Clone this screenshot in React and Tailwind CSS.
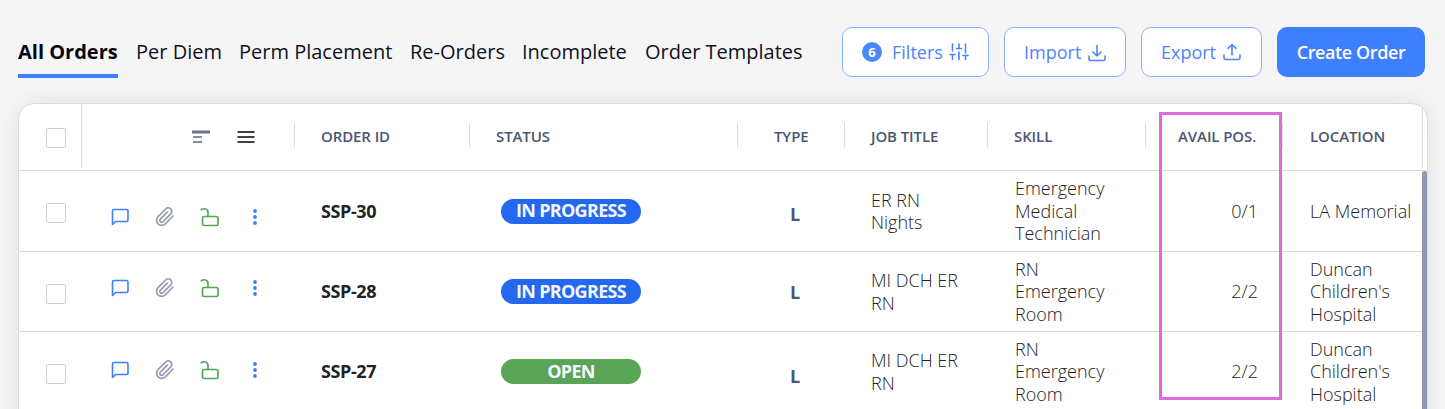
const tabs = [
  { label: "All Orders", active: true, w: "w-[100px]" },
  { label: "Per Diem", w: "w-[85px]" },
  { label: "Perm Placement", w: "w-[153px]" },
  { label: "Re-Orders", w: "w-[94px]" },
  { label: "Incomplete", w: "w-[105px]" },
  { label: "Order Templates", w: "w-[158px]" },
];

const rows = [
  { id: "SSP-30", status: "IN PROGRESS", color: "bg-[#2368ef]", job: ["ER RN", "Nights"], skill: ["Emergency", "Medical", "Technician"], avail: "0/1", location: ["LA Memorial"], height: "h-[81px]", icons: "pt-[11px]", type: "pt-[6px]", check: "pt-[3px]" },
  { id: "SSP-28", status: "IN PROGRESS", color: "bg-[#2368ef]", job: ["MI DCH ER", "RN"], skill: ["RN", "Emergency", "Room"], avail: "2/2", location: ["Duncan", "Children's", "Hospital"], height: "h-[80px]", icons: "pb-[7px]", type: "pt-[2px]", check: "pt-[5px]" },
  { id: "SSP-27", status: "OPEN", color: "bg-[#59a457]", job: ["MI DCH ER", "RN"], skill: ["RN", "Emergency", "Room"], avail: "2/2", location: ["Duncan", "Children's", "Hospital"], height: "h-[80px]", icons: "pb-[4px]", type: "pt-[9px]", check: "pt-[5px]" },
];

const headers = [
  { label: "ORDER ID", w: "w-[175px]", pad: "pl-[26px]" },
  { label: "STATUS", w: "w-[268px]", pad: "pl-[26px]" },
  { label: "TYPE", w: "w-[107px]", pad: "pl-[36px]" },
  { label: "JOB TITLE", w: "w-[143px]", pad: "pl-[26px]" },
  { label: "SKILL", w: "w-[158px]", pad: "pl-[26px]" },
  { label: "AVAIL POS.", w: "w-[137px]", pad: "pl-[32px]" },
];

function Checkbox() {
  return <span className="block size-5 rounded-[2px] border border-[#ccd0d9] bg-white" />;
}

function SlidersIcon() {
  return (
    <svg className="size-5" viewBox="0 0 20 20" fill="none" stroke="currentColor" strokeWidth="1.6" strokeLinecap="round">
      <path d="M3.5 2v7M3.5 12.500v5M1 12.500h5M10 2v4M10 10v7.500M7.500 6.500h5M16.500 2v9M16.500 14.500v3M14 13.500h5" />
    </svg>
  );
}

function TransferIcon({ up }) {
  return (
    <svg className="h-5 w-[18px]" viewBox="0 0 18 20" fill="none" stroke="currentColor" strokeWidth="1.6" strokeLinecap="round" strokeLinejoin="round">
      <path d={up ? "M1 13v3q0 1.500 1.500 1.500h13q1.500 0 1.500-1.500V13" : "M1 14v3q0 1.500 1.500 1.500h13q1.500 0 1.500-1.500V14"} />
      <path d={up ? "M9 13V2.500M5 6.500l4-4 4 4" : "M9 3.500v10.500M5 10l4 4 4-4"} />
    </svg>
  );
}

function ChatIcon() {
  return (
    <svg className="size-5 text-[#3d7fff]" viewBox="0 0 20 20" fill="none" stroke="currentColor" strokeWidth="1.6" strokeLinejoin="round">
      <path d="M2.5 17.500V4q0-1.500 1.500-1.500h12.500q1.500 0 1.500 1.500v9q0 1.500-1.500 1.500H5.500z" />
    </svg>
  );
}

function ClipIcon() {
  return (
    <svg className="size-5 text-[#959db3]" viewBox="0 0 20 20" fill="none" stroke="currentColor" strokeWidth="1.700" strokeLinecap="round" strokeLinejoin="round">
      <path d="M18 9l-7.700 7.800a5 5 0 0 1-7.300-7.100l7.700-7.700a3.500 3.500 0 0 1 5.100 4.900l-7.700 7.800a1.800 1.800 0 0 1-2.700-2.500l6.900-7" />
    </svg>
  );
}

function UnlockIcon() {
  return (
    <svg className="size-5 text-[#55a853]" viewBox="0 0 20 20" fill="none" stroke="currentColor" strokeWidth="1.700" strokeLinecap="round">
      <rect x="2.500" y="9.500" width="15.500" height="9" rx="1.500" />
      <path d="M1.300 2.800C4 .800 8 1.800 8 5.400V9.500" />
    </svg>
  );
}

function DotsIcon() {
  return (
    <svg className="size-5 text-[#3d7fff]" viewBox="0 0 20 20" fill="currentColor">
      <circle cx="10" cy="4" r="1.900" />
      <circle cx="10" cy="10" r="1.900" />
      <circle cx="10" cy="16" r="1.900" />
    </svg>
  );
}

function OutlineButton({ className, children }) {
  return (
    <button className={`flex h-[50px] items-center rounded-[10px] border border-[#8bb2fc] bg-white text-left text-lg text-[#4b84fb] ${className}`}>
      {children}
    </button>
  );
}

function Lines({ items }) {
  return items.map((t) => (
    <span key={t} className="block whitespace-nowrap">{t}</span>
  ));
}

export default function App() {
  return (
    <div className="relative h-[409px] w-[1445px] overflow-hidden bg-[#f5f5f5] font-['Open_Sans',sans-serif]">
      <header className="flex h-[103px] items-start pl-[18px] pt-[27px]">
        <nav className="flex w-[824px] gap-[18px] text-[20px] leading-[50px] text-[#10101c]">
          {tabs.map((t) => (
            <a key={t.label} className={`block h-[51px] shrink-0 whitespace-nowrap ${t.w} ${t.active ? "border-b-4 border-[#3d7fff] font-bold text-[#050510]" : ""}`}>
              {t.label}
            </a>
          ))}
        </nav>
        <div className="flex gap-[15px]">
          <OutlineButton className="w-[147px] pl-[19px]">
            <span className="flex size-5 items-center justify-center rounded-full bg-[#4b88ff] text-[13px] font-bold text-white">6</span>
            <span className="ml-[10px] w-[57px]">Filters</span>
            <SlidersIcon />
          </OutlineButton>
          <OutlineButton className="w-[122px] pl-[19px]">
            <span className="w-[64px]">Import</span>
            <TransferIcon />
          </OutlineButton>
          <OutlineButton className="w-[121px] pl-[19px]">
            <span className="w-[62px]">Export</span>
            <TransferIcon up />
          </OutlineButton>
          <button className="h-[50px] w-[148px] whitespace-nowrap rounded-[10px] bg-[#3d7fff] text-lg font-semibold tracking-[-0.4px] text-white">Create Order</button>
        </div>
      </header>

      <main className="ml-[18px] h-[330px] w-[1410px] overflow-hidden rounded-t-[16px] border border-[#dcdcde] bg-white shadow-[0_0_24px_rgba(0,0,0,0.08)]">
        <div className="flex h-[67px] border-b border-[#dcdcde] text-[15px] font-semibold tracking-[-0.1px] text-[#4a5672]">
          <div className="flex h-[64px] w-[63px] items-center border-r border-[#dcdcde] pl-[27px] pt-1">
            <Checkbox />
          </div>
          <div className="flex h-[65px] w-[212px] items-center pl-[110px]">
            <svg className="h-[14px] w-[18px]" viewBox="0 0 18 14">
              <path d="M0 2h18" stroke="#69728f" strokeWidth="3" />
              <path d="M1 7h9M1 12h9" stroke="#858ca4" strokeWidth="2" />
            </svg>
            <svg className="ml-[27px] h-[14px] w-[18px]" viewBox="0 0 18 14" stroke="#414141" strokeWidth="2">
              <path d="M.5 2h17M.5 7h17M.5 12h17" />
            </svg>
          </div>
          {headers.map((h) => (
            <div key={h.label} className={`mt-[19px] flex h-[25px] shrink-0 items-center whitespace-nowrap border-l border-[#dcdcde] pt-px ${h.w} ${h.pad}`}>{h.label}</div>
          ))}
          <div className="mt-[19px] flex h-[25px] w-[140px] shrink-0 items-center border-l border-[#dcdcde] pl-[27px] pt-px">LOCATION</div>
          <div className="h-[64px] w-[5px] border-l border-[#dcdcde]" />
        </div>
        <div className="flex">
          <div className="w-[1403px]">
            {rows.map((r) => (
              <div key={r.id} className={`flex items-center border-b border-[#dcdcde] text-[18px] leading-[22.5px] text-[#222] ${r.height}`}>
                <div className={`w-[91px] shrink-0 pl-[27px] ${r.check}`}><Checkbox /></div>
                <div className={`flex w-[211px] shrink-0 gap-[25px] ${r.icons}`}>
                  <ChatIcon /><ClipIcon /><UnlockIcon /><DotsIcon />
                </div>
                <div className="w-[180px] shrink-0 font-bold tracking-[-0.4px]">{r.id}</div>
                <div className="w-[289px] shrink-0">
                  <div className={`flex h-[25px] w-[140px] items-center justify-center rounded-full pb-px font-bold tracking-[-0.7px] text-[#f4f7ff] ${r.color}`}>{r.status}</div>
                </div>
                <div className={`w-[81px] shrink-0 font-bold text-[#4a5672] ${r.type}`}>L</div>
                <div className="w-[144px] shrink-0 font-light"><Lines items={r.job} /></div>
                <div className="w-[143px] shrink-0 font-light"><Lines items={r.skill} /></div>
                <div className="w-[100px] shrink-0 text-right font-light">{r.avail}</div>
                <div className="ml-[52px] font-light"><Lines items={r.location} /></div>
              </div>
            ))}
          </div>
          <div className="h-[260px] w-[5px] rounded-t-full bg-[#9197ac]" />
        </div>
      </main>
      <div className="absolute left-[1159px] top-[112px] h-[288px] w-[123px] border-[3px] border-[#df69dd]" />
    </div>
  );
}
